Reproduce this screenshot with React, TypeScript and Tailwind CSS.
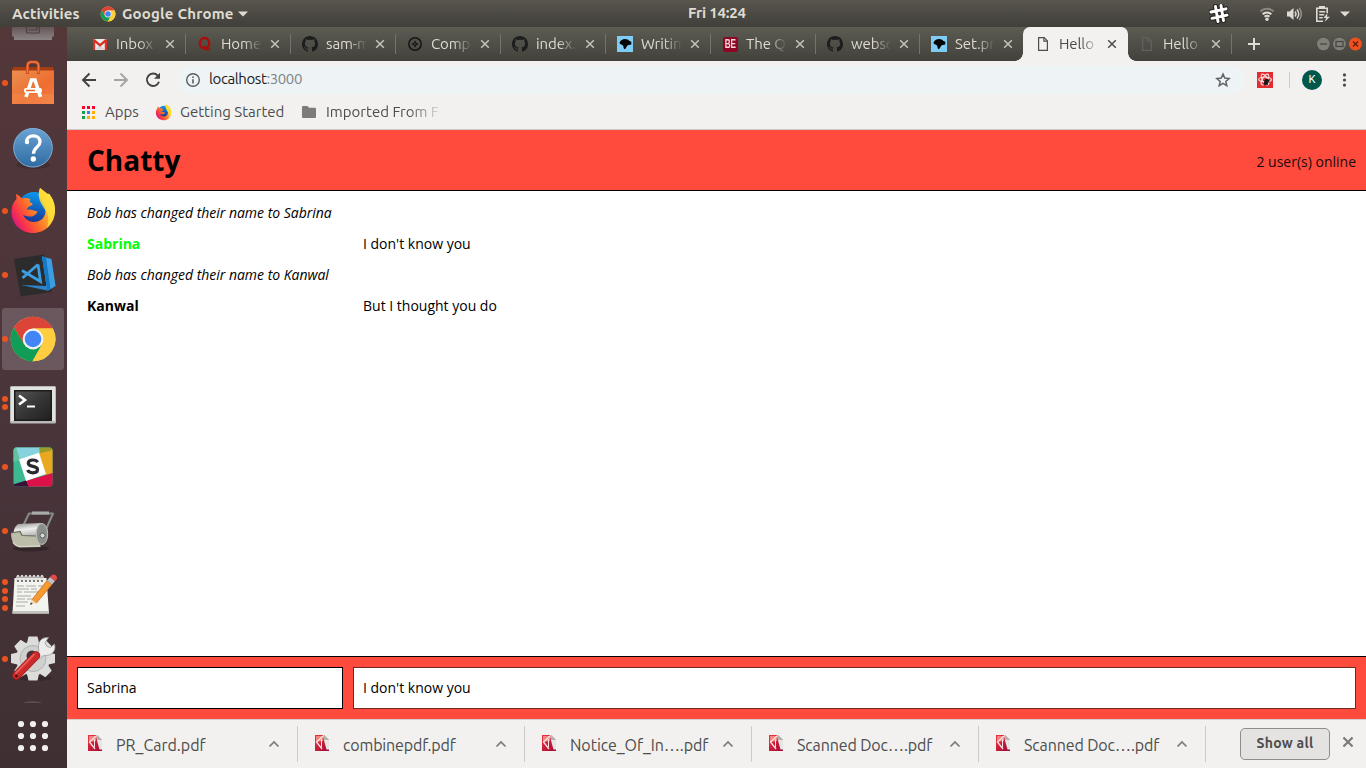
import type { ReactNode } from "react";

const UI = "font-['Ubuntu','Noto_Sans',sans-serif]";

/* ---------- small icons ---------- */

function ChromeLogo({ size }: { size: number }) {
  return (
    <svg width={size} height={size} viewBox="0 0 48 48">
      <circle cx="24" cy="24" r="22.300" fill="#ffcd40" />
      <path d="M24 13.500h19.700A22.300 22.300 0 0 0 4.900 12.500L14.500 29z" fill="#db4437" />
      <path d="M4.900 12.500A22.300 22.300 0 0 0 23.500 46.300L33 29.500 24 34 14.900 29z" fill="#0f9d58" />
      <path d="M23.500 46.300A22.300 22.300 0 0 0 43.900 13.500H24l9.200 15.500z" fill="#ffcd40" />
      <circle cx="24" cy="24" r="10.400" fill="#f4f4f4" />
      <circle cx="24" cy="24" r="8.300" fill="#4285f4" />
    </svg>
  );
}

function FirefoxLogo({ size }: { size: number }) {
  return (
    <svg width={size} height={size} viewBox="0 0 48 48">
      <defs>
        <linearGradient id="ffBody" x1="0.95" y1="0.2" x2="0.05" y2="0.75">
          <stop offset="0" stopColor="#fff04a" />
          <stop offset="0.35" stopColor="#ffa22a" />
          <stop offset="0.6" stopColor="#ff6a2a" />
          <stop offset="0.85" stopColor="#f9304e" />
          <stop offset="1" stopColor="#d81a80" />
        </linearGradient>
        <linearGradient id="ffGlobe" x1="0.6" y1="0" x2="0.4" y2="1">
          <stop offset="0" stopColor="#0a9bf0" />
          <stop offset="1" stopColor="#1b2a8a" />
        </linearGradient>
      </defs>
      <circle cx="25" cy="21.500" r="16.500" fill="url(#ffGlobe)" />
      <path d="M31 1c3 2 5 4 8 6l1-.5c4 5 6.500 11 6 18C45.500 37 36 46 24 46 12 46 2.500 37 2.500 25c0-6 2-10 5-13l-.5-5c3 1 4 3 6 4.500 3-.8 6-.5 8.500 1-1.500 2-1 3 1.500 3.500l.5 2c-3 1-5 2-6 5 5-1.500 8 2 11 1-1 4-5 6-8.500 5.500-3-.4-4-1-6-1.500 2 4 6 7 11 7 7 0 12-5 11.500-12C37 16 27 12 31 1z" fill="url(#ffBody)" />
      <path d="M31 1c3 2 5 5 8 7 6 6 8 14 6 21-1.500 5-4 9-7 12 2-7 2-12-1-17-4-6-10-13-6-23z" fill="#ffe03a" opacity=".8" />
    </svg>
  );
}

function GithubMark() {
  return (
    <svg width="16" height="16" viewBox="0 0 16 16" fill="#1c1d1e">
      <path d="M8 0C3.580 0 0 3.580 0 8c0 3.540 2.290 6.530 5.470 7.590.4.07.55-.17.55-.38 0-.19-.01-.82-.01-1.490-2.010.37-2.530-.49-2.690-.94-.09-.23-.48-.94-.82-1.130-.28-.15-.68-.52-.01-.53.63-.01 1.080.58 1.230.82.72 1.210 1.870.87 2.330.66.07-.52.28-.87.51-1.070-1.780-.2-3.640-.89-3.640-3.950 0-.87.31-1.590.82-2.150-.08-.2-.36-1.020.08-2.120 0 0 .67-.21 2.200.82.64-.18 1.320-.27 2-.27s1.360.09 2 .27c1.530-1.040 2.200-.82 2.200-.82.44 1.100.16 1.920.08 2.120.51.56.82 1.270.82 2.150 0 3.070-1.870 3.750-3.650 3.950.29.25.54.73.54 1.480 0 1.070-.01 1.930-.01 2.200 0 .21.15.46.55.38A8.010 8.010 0 0 0 16 8c0-4.420-3.580-8-8-8z" />
    </svg>
  );
}

function GmailMark() {
  return (
    <svg width="16" height="16" viewBox="0 0 16 16">
      <rect x="1" y="3" width="14" height="11" rx="1" fill="#eceaea" />
      <path d="M3 13.500 8 9l5 4.500z" fill="#d4d2d2" />
      <path d="M1 3.600 2.500 3 8 7.800 13.500 3l1.500.6V14h-2.200V6.800L8 10.800 3.200 6.800V14H1z" fill="#d93025" />
    </svg>
  );
}

function QuoraMark() {
  return (
    <svg width="16" height="16" viewBox="0 0 16 16">
      <ellipse cx="7.500" cy="7.300" rx="4.700" ry="5.200" fill="none" stroke="#a80f0a" strokeWidth="2.500" />
      <path d="M5.500 10c2.500-1 4 .5 4.800 2.200.6 1.300 1.900 1.300 2.100-.2h1c0 3-3.800 4-5.300 1.300C7.300 12 6.500 11 5.500 11.200z" fill="#a80f0a" />
    </svg>
  );
}

function CompassMark() {
  return (
    <svg width="16" height="16" viewBox="0 0 16 16">
      <circle cx="8" cy="8" r="6.200" fill="none" stroke="#151515" strokeWidth="1.500" />
      <path d="M8 4.300 9.300 6.700 11.700 8 9.300 9.300 8 11.700 6.700 9.300 4.300 8 6.700 6.700z" fill="#151515" />
      <circle cx="8" cy="8" r=".8" fill="#55544c" />
    </svg>
  );
}

function DuckMark() {
  return (
    <svg width="16" height="16" viewBox="0 0 16 16">
      <rect width="16" height="16" fill="#7fcdf5" />
      <path d="M2.500 6.500C3.500 4.500 5.500 3 8 3c2 0 3.500.8 4.500 2l1.800.8v2.700l-2.500.5c-1.500 0-1.800 1-2.300 2L8 13.300c-1-.3-1.500-1-1.500-2.200 0-1.400-1-2.100-2-2.600-1 0-2-.7-2-2z" fill="#050505" />
    </svg>
  );
}

function BeMark() {
  return (
    <span className="flex size-[15px] items-center justify-center rounded-[2px] bg-[#8f0524] font-['Liberation_Sans',sans-serif] text-[12px] leading-none font-bold text-[#f0d6db]">
      <span className="inline-block scale-x-[.68]">BE</span>
    </span>
  );
}

function PageMark({ color }: { color: string }) {
  return (
    <svg width="16" height="16" viewBox="0 0 16 16" fill="none" stroke={color} strokeWidth="1.200">
      <path d="M3.600 1.600h5.600l3.200 3.300v9.500H3.600z" />
      <path d="M8.900 1.600v3.600h3.500" />
    </svg>
  );
}

function Cross({ color, size = 10, width = 1.5 }: { color: string; size?: number; width?: number }) {
  return (
    <svg width={size} height={size} viewBox="0 0 10 10" stroke={color} strokeWidth={width}>
      <path d="M1.200 1.200 8.800 8.800M8.800 1.200 1.200 8.800" />
    </svg>
  );
}

function PdfMark() {
  return (
    <svg width="16" height="16" viewBox="0 0 16 16">
      <defs>
        <linearGradient id="pdf" x1="0" y1="0" x2="1" y2="1">
          <stop offset="0" stopColor="#f0353c" /><stop offset="1" stopColor="#9d0838" />
        </linearGradient>
      </defs>
      <path d="M1 0h9l5 5v11H1z" fill="url(#pdf)" />
      <path d="M2 1h7v5L2 7z" fill="#f5847c" />
      <path d="M9 1 2.500 7l5.500 7" fill="none" stroke="#fbe3e4" strokeWidth="1.300" />
      <path d="M7.500 4v8" stroke="#fbe3e4" strokeWidth="1" />
      <path d="M9 0h1l5 5v9.500h-2.500L10 5.500z" fill="#e6e4e4" />
      <path d="M10 0v5h5z" fill="#b5b2b2" />
    </svg>
  );
}

/* ---------- top bar ---------- */

function TopBar() {
  return (
    <header className={`flex h-[27px] shrink-0 items-center bg-linear-to-b from-[#58554d] to-[#403f3a] text-[15px] leading-[20px] font-semibold whitespace-nowrap text-[#dfdbd2] ${UI}`}>
      <div className="flex w-[620px] items-center">
        <span className="ml-3 w-[88px] tracking-[0.1px]">Activities</span>
        <ChromeLogo size={16} />
        <span className="ml-[6px] w-[116px] tracking-[0.2px]">Google Chrome</span>
        <svg width="10" height="6" viewBox="0 0 10 6"><path d="M0 .5h10L5 5.500z" fill="#dfdbd2" /></svg>
      </div>
      <span className="ml-[68px] w-[521px] tracking-[-0.2px]"><span className="relative -top-px">Fri 14:24</span></span>
      <svg width="20" height="20" viewBox="0 0 20 20" fill="none" strokeLinecap="round">
        <path d="M6.500 2.500 9 17.500M12 1.500 14.500 16.500M2 8 17 4.800M3 14.300 18 11.200" stroke="#24231f" strokeWidth="5" />
        <path d="M6.500 2.500 9 17.500M12 1.500 14.500 16.500M2 8 17 4.800M3 14.300 18 11.200" stroke="#fff" strokeWidth="2.900" />
      </svg>
      <svg className="ml-[30px]" width="16" height="16" viewBox="0 0 16 16" fill="none" strokeWidth="2">
        <path d="M1.500 5.500a9 9 0 0 1 13 0" stroke="#88857e" />
        <path d="M3.700 8.300a6 6 0 0 1 8.600 0" stroke="#dfdbd2" />
        <path d="M5.600 10.800a3.400 3.400 0 0 1 4.800 0" stroke="#dfdbd2" />
        <circle cx="8" cy="13.300" r="1.700" fill="#dfdbd2" />
      </svg>
      <svg className="ml-[11px]" width="17" height="16" viewBox="0 0 17 16">
        <path d="M1 5.500h2.500L7.500 2v12L3.500 10.500H1z" fill="#dfdbd2" />
        <path d="M9 5.500q2 2.500 0 5M11 3.500q3.500 4.500 0 9" fill="none" stroke="#dfdbd2" strokeWidth="1.400" />
        <path d="M13.200 1.800q4.300 6.200 0 12.400" fill="none" stroke="#99968e" strokeWidth="1.400" />
      </svg>
      <svg className="ml-[12px]" width="16" height="18" viewBox="0 0 16 18">
        <path d="M1.800 3.200h10.400V8M1.800 2.500V16.200H8" fill="none" stroke="#dfdbd2" strokeWidth="1.600" />
        <path d="M4 1h6v2.500H4zM4.200 6h6v1.500h-6zM4.200 9h5v1.500h-5zM4.200 12h3.500v1.500H4.200z" fill="#dfdbd2" />
        <path d="M12.500 8 8.500 13h2.700L9.500 17l5.500-5.200h-3z" fill="#dfdbd2" />
      </svg>
      <svg className="ml-[9px]" width="10" height="6" viewBox="0 0 10 6"><path d="M0 .5h10L5 5.500z" fill="#dfdbd2" /></svg>
    </header>
  );
}

/* ---------- dock ---------- */

function SoftwareIcon() {
  return (
    <svg width="48" height="48" viewBox="0 0 48 48">
      <defs>
        <linearGradient id="bag" x1="0" y1="0" x2="1" y2="1">
          <stop offset="0" stopColor="#e99050" /><stop offset=".6" stopColor="#ee6d30" /><stop offset="1" stopColor="#f08048" />
        </linearGradient>
      </defs>
      <path d="M4 8H44l1 4H3z" fill="#a63c12" />
      <path d="M3 11.500h42V45H3z" fill="url(#bag)" />
      <path d="M3 35h42v10H3z" fill="#f4884f" opacity=".55" />
      <path d="M18.500 15V7q0-4 4-4h3q4 0 4 4v8" fill="none" stroke="#c84d1c" strokeWidth="3" />
      <path d="M18.500 14V7q0-4 4-4h3q4 0 4 4v7" fill="none" stroke="#ef7840" strokeWidth="1.500" />
      <path d="M17 38 22.500 21h3.500L31.500 38" fill="none" stroke="#fff" strokeWidth="3.600" />
      <rect x="15" y="29" width="18" height="5" rx="2" fill="#fff" />
      <path d="M17 31.500h9" stroke="#e8662b" strokeWidth="1.500" />
    </svg>
  );
}

function HelpIcon() {
  return (
    <svg width="48" height="48" viewBox="0 0 48 48">
      <defs>
        <linearGradient id="help" x1="0" y1="0" x2="0" y2="1">
          <stop offset="0" stopColor="#6ba3d2" /><stop offset="1" stopColor="#2f6ba2" />
        </linearGradient>
      </defs>
      <ellipse cx="24" cy="42" rx="17" ry="4" fill="#2f2226" opacity=".4" />
      <circle cx="24" cy="24.700" r="19.300" fill="url(#help)" stroke="#7db0da" />
      <path d="M17.500 19c0-4 3-6.200 6.700-6.200 4 0 6.800 2.300 6.800 5.900 0 5.500-6.500 5.500-6.500 12" fill="none" stroke="#fff" strokeWidth="3.300" />
      <circle cx="18" cy="19" r="2.200" fill="#fff" />
      <circle cx="24.300" cy="36" r="2.700" fill="#fff" />
    </svg>
  );
}

function CodeIcon() {
  return (
    <svg width="48" height="48" viewBox="0 0 48 48">
      <path d="M5 8 35 3.500 43 41 11.500 45.500z" fill="#2c2c2c" />
      <path d="M33 5l8 4 5.500 25L38 39z" fill="#0d6fb8" />
      <path d="M33 5.500 42.500 8l4 27-8 5z" fill="#3b9ee2" />
      <path d="M33 5.500 37 6.600 41.500 38 38 39.500z" fill="#1478c2" />
      <path d="M12 34 38 35v4.500z" fill="#2c83c8" />
      <path d="M29 13.500 13.500 27M13 19.500 31.500 30.500 29 13.500" fill="none" stroke="#3b9ee2" strokeWidth="2.800" />
    </svg>
  );
}

function TerminalIcon() {
  return (
    <svg width="48" height="48" viewBox="0 0 48 48">
      <defs>
        <linearGradient id="term" x1="0" y1="0" x2="1" y2="1">
          <stop offset="0" stopColor="#555" /><stop offset=".5" stopColor="#363636" /><stop offset="1" stopColor="#202020" />
        </linearGradient>
      </defs>
      <rect x="1" y="7" width="46" height="37.500" rx="1.500" fill="#b9b9b7" />
      <rect x="2" y="8" width="44" height="34" fill="#e2e2e0" />
      <rect x="5" y="11" width="38" height="31" fill="#1b1b1b" />
      <rect x="6.500" y="12.500" width="35" height="28" fill="url(#term)" />
      <path d="M10 16.500 16 21l-6 4.500" fill="none" stroke="#fff" strokeWidth="2.600" />
      <path d="M18 27.500h8" stroke="#fff" strokeWidth="2" />
    </svg>
  );
}

function SlackIcon() {
  return (
    <svg width="48" height="48" viewBox="0 0 48 48">
      <defs><clipPath id="slackClip"><rect x="4.500" y="4.500" width="39" height="39" rx="3" /></clipPath></defs>
      <g clipPath="url(#slackClip)">
        <path d="M4 4h40v40H4z" fill="#3eb890" />
        <path d="M6 4h25l2 6-23 7z" fill="#86d3dd" />
        <path d="M4 4h3l4 13-7 2z" fill="#63c1a0" />
        <path d="M30 4h14v4l-13 4z" fill="#9b9b28" />
        <path d="M30 10.500 44 7v23l-8 2z" fill="#e9a820" />
        <path d="M16 38l28-8v14H18z" fill="#dc1148" />
        <path d="M4 41.500l13-4 3 7H4z" fill="#361238" />
        <path d="M10 16.500 30 9.800 37 31 17 38z" fill="#fff" />
      </g>
      <path d="M28.700 19.200c-1-1.600-2.800-2.200-4.700-2.200-2.900 0-4.700 1.300-4.700 3.300 0 4.300 9.200 1.900 9.200 6.200 0 2.200-2.200 3.300-4.700 3.300-2.600 0-4.400-.9-5.200-2.800" fill="none" stroke="#2a2a33" strokeWidth="3.200" />
    </svg>
  );
}

function RollerIcon() {
  return (
    <svg width="48" height="48" viewBox="0 0 48 48">
      <defs>
        <linearGradient id="roll" x1="0" y1="0" x2="0.2" y2="1">
          <stop offset="0" stopColor="#8d8d89" /><stop offset=".35" stopColor="#ededeb" /><stop offset="1" stopColor="#777" />
        </linearGradient>
      </defs>
      <ellipse cx="22" cy="41.500" rx="18" ry="3" fill="#241b1e" opacity=".55" />
      <path d="M14 19 20 6.500h24L34 29" fill="none" stroke="#858b88" strokeWidth="2" strokeLinejoin="round" />
      <path d="M23 6h17" stroke="#a9adaa" strokeWidth="3" />
      <path d="M9 17 31 16c6 1 8.500 6 7.500 13-1 6-4 9-8.500 9L10 36C4 33 2 22 9 17z" fill="url(#roll)" />
      <path d="M2 26l9-1.500 2 4 14 .5 5 11-21 .5C5 39.500 2 34 2 26z" fill="#bcbea9" />
      <path d="M4 35q2 4 7 4.500l20-.5" fill="none" stroke="#dcddd0" strokeWidth="1.200" />
      <path d="M2 26l9-1.500 2 4 14 .5" fill="none" stroke="#676859" strokeWidth="1.200" />
      <ellipse cx="33" cy="27" rx="5.700" ry="10.500" fill="#8b8f8c" stroke="#b9bcb9" />
      <circle cx="33.500" cy="28.500" r="2.500" fill="#d6d8d6" stroke="#5f6260" />
    </svg>
  );
}

function NotesIcon() {
  return (
    <svg width="48" height="48" viewBox="0 0 48 48">
      <path d="M5.500 7h32l2.500 35.500H3.500z" fill="#f3f3ef" />
      <path d="M3.500 40H40v2.500H3.500z" fill="#c4c4bf" />
      {[8, 12, 16, 20, 24, 28, 32].map((x) => (
        <path key={x} d={`M${x} 10V6q1-3 2 0v3`} fill="none" stroke="#dededc" strokeWidth="1.400" />
      ))}
      {[9, 13, 17, 21, 25, 29, 33].map((x) => (
        <circle key={x} cx={x} cy="10" r=".9" fill="#444" />
      ))}
      <path d="M8 15h7m2 0h10m2 0h5M8 18h12m2 0h6M8 21h5m2 0h15M8 25h14M8 28h8m2 0h5M7 31h12M7 35h9" stroke="#a9a9a6" strokeWidth="1" />
      <path d="M23 27.500 38 8.500l5 4L27.500 31z" fill="#f59a31" stroke="#c46a15" strokeWidth=".7" transform="translate(0 1)" />
      <path d="M23 28.500 21 33.500 27.500 32z" fill="#ecd7ae" />
      <path d="M22 31.500 21 33.800 23.500 33z" fill="#222" />
      <path d="M38 9.500 41 6l5 4-3 3.500z" fill="#bfc3c6" />
      <path d="M41 6q3-4 6-1.500 2.500 3-1 5.500z" fill="#e5474c" />
    </svg>
  );
}

function SettingsIcon() {
  const teeth = [0, 45, 90, 135, 180, 225, 270, 315];
  return (
    <svg width="48" height="48" viewBox="0 0 48 48">
      <ellipse cx="26" cy="43" rx="17" ry="3" fill="#241b1e" opacity=".4" />
      {teeth.map((a) => (
        <path key={a} d="M18 8 19.500 1.500h9L30 8z" fill="#dcdcdb" transform={`rotate(${a} 24 23.5)`} />
      ))}
      <circle cx="24" cy="23.500" r="17" fill="#dcdcdb" />
      <circle cx="24" cy="23.500" r="13" fill="#d0d0cf" stroke="#b3b3b2" />
      <circle cx="23" cy="21" r="5.500" fill="#453339" />
      <path d="M27 21c3-3 3-5 2.500-8C29 6 33 2 39.500 2.500l-3.500 5 2 4 3.500 1 4-3.500c2 7-3 11.500-9 11.500-3 0-4 1-6 3.500z" fill="#ececec" stroke="#999" strokeWidth=".8" />
      <path d="M27 20.500 7.500 40.500" stroke="#9d1919" strokeWidth="8.500" strokeLinecap="round" />
      <path d="M27 20.500 7.500 40.500" stroke="#cc2a2a" strokeWidth="7" strokeLinecap="round" />
      <path d="M25 19.500 7 38" stroke="#ea5b56" strokeWidth="1.800" strokeLinecap="round" />
      <circle cx="7.500" cy="41" r="1.500" fill="#531010" />
    </svg>
  );
}

const dock: { dots: number; icon: ReactNode; active?: boolean }[] = [
  { dots: 1, icon: <SoftwareIcon /> },
  { dots: 0, icon: <HelpIcon /> },
  { dots: 1, icon: <FirefoxLogo size={48} /> },
  { dots: 1, icon: <CodeIcon /> },
  { dots: 1, icon: <ChromeLogo size={48} />, active: true },
  { dots: 2, icon: <TerminalIcon /> },
  { dots: 1, icon: <SlackIcon /> },
  { dots: 1, icon: <RollerIcon /> },
  { dots: 4, icon: <NotesIcon /> },
  { dots: 1, icon: <SettingsIcon /> },
];

function Dock() {
  return (
    <nav className="flex w-[67px] shrink-0 flex-col overflow-hidden bg-linear-to-b from-[#533739] via-[#4a353b] to-[#3f2f33]">
      <svg className="ml-3 shrink-0" width="42" height="24" viewBox="0 0 42 24">
        <defs>
          <linearGradient id="cab" x1="0" y1="0" x2="0" y2="1"><stop offset="0" stopColor="#655659" /><stop offset="1" stopColor="#8b8584" /></linearGradient>
        </defs>
        <path d="M0 0h42v9l-2 1v3H2v-3L0 9z" fill="url(#cab)" />
        <path d="M14.500 0v4q0 2 2 2h9q2 0 2-2V0M17 3h8V0" fill="none" stroke="#4b4143" strokeWidth="1.200" />
      </svg>
      {dock.map((d, i) => (
        <div key={i} className="flex h-16 shrink-0 items-center pl-[2px]">
          <div className={`flex h-[62px] w-[62px] items-center rounded-[3px] ${d.active ? "bg-[#6b585e]" : ""}`}>
            <div className="flex w-[7px] flex-col gap-[2.400px]">
              {Array.from({ length: d.dots }, (_, n) => (
                <span key={n} className="size-[6px] rounded-full bg-[#e95420]" />
              ))}
            </div>
            {d.icon}
          </div>
        </div>
      ))}
      <svg className="shrink-0" width="67" height="77" viewBox="0 0 67 77" fill="#f2f0ee">
        <path d="M22 12q11-4 21 0z" fill="#5b4b4e" />
        {[33, 45, 57].map((y) => [21, 33, 45].map((x) => <circle key={`${x}-${y}`} cx={x} cy={y} r="3.100" />))}
      </svg>
    </nav>
  );
}

/* ---------- browser ---------- */

const tabs: { title: string; icon: ReactNode; wide: boolean; state?: "active" | "before" }[] = [
  { title: "Inbox", icon: <GmailMark />, wide: true },
  { title: "Home", icon: <QuoraMark />, wide: true },
  { title: "sam-m", icon: <GithubMark />, wide: true },
  { title: "Comp", icon: <CompassMark />, wide: true },
  { title: "index.", icon: <GithubMark />, wide: true },
  { title: "Writin", icon: <DuckMark />, wide: true },
  { title: "The Q", icon: <BeMark />, wide: true },
  { title: "webso", icon: <GithubMark />, wide: false },
  { title: "Set.pr", icon: <DuckMark />, wide: false, state: "before" },
  { title: "Hello", icon: <PageMark color="#4d4d4d" />, wide: false, state: "active" },
  { title: "Hello", icon: <PageMark color="#62615b" />, wide: false },
];

function TabStrip() {
  return (
    <div className={`flex h-[34px] shrink-0 bg-linear-to-b from-[#5d5c53] to-[#42413b] pl-[14px] ${UI}`}>
      {tabs.map((t, i) => {
        const active = t.state === "active";
        return (
          <div
            key={i}
            className={`relative flex h-[34px] shrink-0 items-center pl-[11px] ${t.wide ? "w-[105px]" : "w-[104px]"} ${active ? "rounded-t-[7px] bg-[#f2f1f0] shadow-[-1px_0_0_#f2f1f0]" : ""}`}
          >
            {active && (
              <>
                <span className="absolute bottom-0 -left-[9px] size-2 bg-[radial-gradient(circle_at_0_0,transparent_7.5px,#f2f1f0_8px)]" />
                <span className="absolute -right-2 bottom-0 size-2 bg-[radial-gradient(circle_at_100%_0,transparent_7.5px,#f2f1f0_8px)]" />
              </>
            )}
            <span className="flex size-4 shrink-0 items-center justify-center">{t.icon}</span>
            <span
              className={`ml-2 shrink-0 overflow-hidden text-[15px] leading-[20px] tracking-[-0.1px] whitespace-nowrap mask-[linear-gradient(to_right,black_55%,transparent_100%)] ${t.wide ? "w-[41px]" : "w-[40px]"} ${active ? "text-[#4a4a4a]" : "text-[#dfdbd2]"}`}
            >
              {t.title}
            </span>
            <span className="ml-2 flex">
              <Cross color={active ? "#4a4a4a" : "#c6c3b9"} />
            </span>
            {!active && t.state !== "before" && <span className="ml-auto h-5 w-px bg-[#75746c]" />}
          </div>
        );
      })}
      <div className="flex flex-1 items-center">
        <svg className="ml-4" width="12" height="12" viewBox="0 0 12 12"><path d="M6 0v12M0 6h12" stroke="#dfdbd2" strokeWidth="2" /></svg>
        <svg className="ml-[57px]" width="46" height="14" viewBox="0 0 46 14" fill="none">
          <circle cx="6.400" cy="7" r="6.300" fill="#807f78" />
          <path d="M3 7h7" stroke="#44433d" strokeWidth="1.200" />
          <circle cx="22.400" cy="7" r="6.300" fill="#807f78" />
          <rect x="19" y="4.500" width="7" height="5" stroke="#44433d" strokeWidth="1.200" />
          <circle cx="38.400" cy="7" r="6.500" fill="#f0501e" />
          <path d="M36 4.500l5 5m0-5-5 5" stroke="#5e2210" strokeWidth="1.400" />
        </svg>
      </div>
    </div>
  );
}

function Toolbar() {
  return (
    <div className={`flex h-[37px] shrink-0 items-center bg-[#f2f1f0] pl-[14px] ${UI}`}>
      <svg width="16" height="16" viewBox="0 0 16 16" fill="none" stroke="#424242" strokeWidth="1.900"><path d="M15 8H2.500M8.500 1.500 2 8l6.500 6.500" /></svg>
      <svg className="ml-4" width="16" height="16" viewBox="0 0 16 16" fill="none" stroke="#a5a4a3" strokeWidth="1.900"><path d="M1 8h12.500M7.500 1.500 14 8l-6.500 6.500" /></svg>
      <svg className="ml-4" width="16" height="16" viewBox="0 0 16 16" fill="none">
        <path d="M12.800 3.600A6.200 6.200 0 1 0 14 9.800" stroke="#424242" strokeWidth="1.900" />
        <path d="M15 .8v6H9z" fill="#424242" />
      </svg>
      <div className="ml-4 flex h-7 w-[1068px] items-center rounded-full bg-[#eef3f5] pr-[14px] pl-2">
        <svg width="16" height="16" viewBox="0 0 16 16"><circle cx="8" cy="8" r="6.300" fill="none" stroke="#5a5d60" strokeWidth="1.400" /><path d="M7.200 7.200h1.600v4.300H7.200zM7.200 4.400h1.600V6H7.200z" fill="#5a5d60" /></svg>
        <span className="ml-2 text-[15px] tracking-[-0.4px] text-[#202124]">localhost<span className="text-[#808488]">:3000</span></span>
        <svg className="ml-auto" width="16" height="16" viewBox="0 0 16 16" fill="none" stroke="#5f6368" strokeWidth="1.500"><path d="M8 2.100l1.750 4 4.350.4-3.300 2.900 1 4.300L8 11.450 4.200 13.700l1-4.300L1.900 6.500l4.350-.4z" /></svg>
      </div>
      <svg className="ml-[12px]" width="16" height="16" viewBox="0 0 16 16">
        <rect width="16" height="16" fill="#e12d31" />
        <g fill="none" stroke="#f5dede" strokeWidth="1.200"><ellipse cx="8" cy="7.500" rx="6.300" ry="2.500" /><ellipse cx="8" cy="7.500" rx="6" ry="2.500" transform="rotate(60 8 7.500)" /><ellipse cx="8" cy="7.500" rx="6" ry="2.500" transform="rotate(120 8 7.500)" /></g>
        <path d="M6.500 8.500 12.500 10M6.500 12l6-4M8.500 7l2 6" stroke="#1c1717" strokeWidth="1" />
        <ellipse cx="9.300" cy="10" rx="2" ry="3.500" transform="rotate(30 9.300 10)" fill="#1c1717" />
      </svg>
      <span className="ml-4 h-4 w-px bg-[#cccbca]" />
      <span className="ml-[12px] flex size-5 items-center justify-center rounded-full bg-[#01574a] font-['Roboto',sans-serif] text-[11px] leading-none text-white">K</span>
      <svg className="ml-[20px]" width="5" height="14" viewBox="0 0 5 14" fill="#4a4a4a"><circle cx="2.500" cy="1.900" r="1.600" /><circle cx="2.500" cy="7" r="1.600" /><circle cx="2.500" cy="12.100" r="1.600" /></svg>
    </div>
  );
}

const appColors = ["#f03", "#f03", "#f03", "#1a9c50", "#3b7cf0", "#fbaf00", "#1a9c50", "#fbaf00", "#fbaf00"];

function Bookmarks() {
  return (
    <div className={`flex h-[32px] shrink-0 items-center border-b border-[#cbcac9] bg-[#f2f1f0] pb-[3px] pl-[15px] text-[15px] leading-[20px] text-[#4d4d4d] ${UI}`}>
      <div className="grid grid-cols-3 gap-[2px]">
        {appColors.map((c, i) => (
          <span key={i} className="size-[3px]" style={{ background: c }} />
        ))}
      </div>
      <span className="ml-[10px] w-[50px]">Apps</span>
      <FirefoxLogo size={17} />
      <span className="ml-[8px] w-[122px] whitespace-nowrap">Getting Started</span>
      <svg width="14" height="12" viewBox="0 0 14 12"><path d="M1 0h4.500L7 1.800h6q1 0 1 1V11q0 1-1 1H1q-1 0-1-1V1q0-1 1-1z" fill="#7d7c7b" /></svg>
      <span className="ml-[10px] w-[113px] overflow-hidden whitespace-nowrap mask-[linear-gradient(to_right,black_72%,transparent_104%)]">Imported From F</span>
    </div>
  );
}

/* ---------- chat page ---------- */

function Chat() {
  return (
    <main className="flex flex-1 flex-col bg-white font-['Open_Sans',sans-serif] text-[14px] leading-[19px] text-black">
      <div className="flex h-[61px] shrink-0 items-center justify-between border-b border-black bg-[#ff4b3e] pr-[10px] pl-5">
        <h1 className="text-[28px] leading-[38px] font-bold">Chatty</h1>
        <span className="pt-[2px] text-[#1c0a08]">2 user(s) online</span>
      </div>
      <div className="flex flex-1 flex-col gap-3 px-5 pt-3">
        <p className="tracking-[-0.02px] italic">Bob has changed their name to Sabrina</p>
        <div className="flex">
          <span className="w-[276px] font-bold text-[#00ff00]">Sabrina</span>
          <span>I don't know you</span>
        </div>
        <p className="tracking-[-0.02px] italic">Bob has changed their name to Kanwal</p>
        <div className="flex">
          <span className="w-[276px] font-bold">Kanwal</span>
          <span>But I thought you do</span>
        </div>
      </div>
      <div className="flex h-[63px] shrink-0 gap-[10px] border-t border-black bg-[#ff4b3e] p-[10px]">
        <div className="flex h-[42px] w-[266px] items-center border border-black bg-white px-[9px] pb-[2px]">Sabrina</div>
        <div className="flex h-[42px] flex-1 items-center border border-[#6e2a20] bg-white px-[9px] pb-[2px]">I don't know you</div>
      </div>
    </main>
  );
}

/* ---------- downloads ---------- */

const files = [
  { name: "PR_Card.pdf", cls: "" },
  { name: "combinepdf.pdf", cls: "tracking-[-0.14px]" },
  { name: "Notice_Of_In….pdf", cls: "tracking-[-0.06px]" },
  { name: "Scanned Doc….pdf", cls: "tracking-[-0.12px]" },
  { name: "Scanned Doc….pdf", cls: "tracking-[-0.12px]" },
];

function Downloads() {
  return (
    <div className={`flex h-[49px] shrink-0 items-center border-t border-[#d0cfce] bg-[#f2f1f0] pl-1 text-[#4d4d4d] ${UI}`}>
      {files.map((f, i) => (
        <div key={i} className="flex h-9 w-[227px] shrink-0 items-center border-r border-[#cccbca] pl-4">
          <span className="-mt-[2px]"><PdfMark /></span>
          <span className={`ml-[13px] w-[140px] pt-[2px] text-[16px] leading-[22px] whitespace-nowrap ${f.cls}`}>{f.name}</span>
          <svg className="ml-[12px]" width="12" height="8" viewBox="0 0 12 8" fill="none" stroke="#7b7a79" strokeWidth="1.700"><path d="M1.500 6.500 6 2l4.500 4.500" /></svg>
        </div>
      ))}
      <div className="ml-[34px] flex h-8 w-[90px] items-center justify-center rounded-[5px] border border-[#8e8d8c] bg-[#e4e3e2] pb-[2px] text-[14px] font-semibold tracking-[0.3px]">Show all</div>
      <span className="ml-[12px] -mt-1 flex"><Cross color="#7b7a79" size={12} width={1.8} /></span>
    </div>
  );
}

export default function App() {
  return (
    <div className="flex h-[768px] w-[1366px] flex-col overflow-hidden">
      <TopBar />
      <div className="flex min-h-0 flex-1">
        <Dock />
        <div className="flex min-w-0 flex-1 flex-col">
          <TabStrip />
          <Toolbar />
          <Bookmarks />
          <Chat />
          <Downloads />
        </div>
      </div>
    </div>
  );
}
